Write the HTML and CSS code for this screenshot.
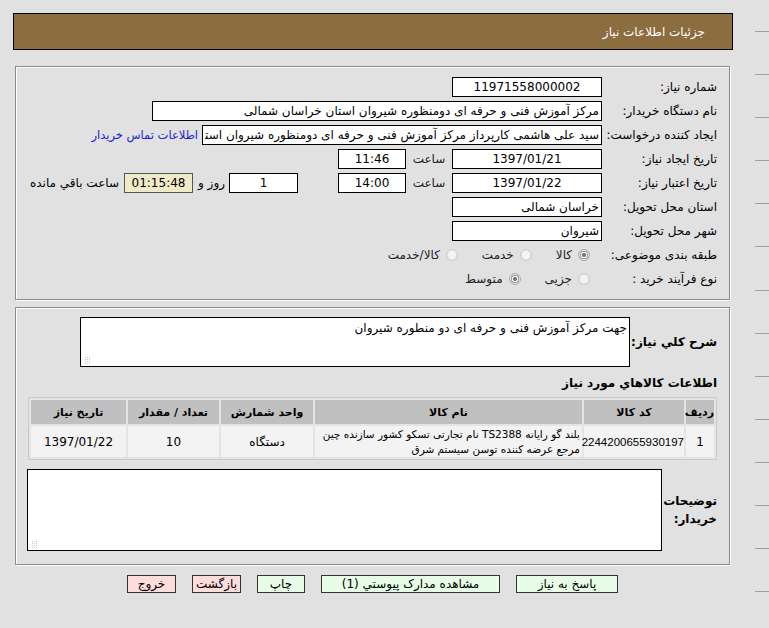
FILE: index.html
```html
<!DOCTYPE html>
<html lang="fa" dir="rtl">
<head>
<meta charset="utf-8">
<title>جزئیات اطلاعات نیاز</title>
<link rel="stylesheet" href="styles.css">
</head>
<body>
<div class="header"><span class="header-title">جزئیات اطلاعات نیاز</span></div>

<section class="panel panel-info">
  <div class="row">
    <div class="lbl">شماره نیاز:</div>
    <div class="fld w150 c">11971558000002</div>
  </div>
  <div class="row">
    <div class="lbl">نام دستگاه خریدار:</div>
    <div class="fld w450">مرکز آموزش فنی و حرفه ای دومنظوره شیروان استان خراسان شمالی</div>
  </div>
  <div class="row">
    <div class="lbl">ایجاد کننده درخواست:</div>
    <div class="fld w400"><span class="clip">سید علی هاشمی کارپرداز مرکز آموزش فنی و حرفه ای دومنظوره شیروان استان</span></div>
    <a class="contact" href="#">اطلاعات تماس خریدار</a>
  </div>
  <div class="row">
    <div class="lbl">تاریخ ایجاد نیاز:</div>
    <div class="fld w150 c">1397/01/21</div>
    <span class="sep">ساعت</span>
    <div class="fld w68 c">11:46</div>
  </div>
  <div class="row">
    <div class="lbl">تاریخ اعتبار نیاز:</div>
    <div class="fld w150 c">1397/01/22</div>
    <span class="sep">ساعت</span>
    <div class="fld w68 c">14:00</div>
    <div class="fld w69 c days">1</div>
    <span class="day-and">روز و</span>
    <div class="fld w69 c remain">01:15:48</div>
    <span class="remain-txt">ساعت باقي مانده</span>
  </div>
  <div class="row">
    <div class="lbl">استان محل تحویل:</div>
    <div class="fld w150">خراسان شمالی</div>
  </div>
  <div class="row">
    <div class="lbl">شهر محل تحویل:</div>
    <div class="fld w150">شیروان</div>
  </div>
  <div class="row">
    <div class="lbl">طبقه بندی موضوعی:</div>
    <div class="opts">
      <span class="opt"><span class="radio on"></span>كالا</span>
      <span class="opt"><span class="radio"></span>خدمت</span>
      <span class="opt"><span class="radio"></span>كالا/خدمت</span>
    </div>
  </div>
  <div class="row">
    <div class="lbl">نوع فرآیند خرید :</div>
    <div class="opts">
      <span class="opt"><span class="radio"></span>جزیی</span>
      <span class="opt"><span class="radio on"></span>متوسط</span>
    </div>
  </div>
</section>

<section class="panel panel-desc">
  <div class="area-row">
    <div class="lbl-b desc-lbl">شرح كلي نياز:</div>
    <div class="area area1">جهت مرکز آموزش فنی و حرفه ای دو منطوره شیروان</div>
  </div>
  <div class="sub-title">اطلاعات كالاهاي مورد نياز</div>
  <table class="items">
    <colgroup>
      <col class="c-idx"><col class="c-code"><col class="c-name"><col class="c-unit"><col class="c-qty"><col class="c-date">
    </colgroup>
    <thead>
      <tr><th>ردیف</th><th>کد کالا</th><th>نام کالا</th><th>واحد شمارش</th><th>تعداد / مقدار</th><th>تاریخ نیاز</th></tr>
    </thead>
    <tbody>
      <tr>
        <td>1</td>
        <td class="code">2244200655930197</td>
        <td class="name">بلند گو رایانه TS2388 نام تجارتی تسکو کشور سازنده چین<br>مرجع عرضه کننده توسن سیستم شرق</td>
        <td>دستگاه</td>
        <td>10</td>
        <td>1397/01/22</td>
      </tr>
    </tbody>
  </table>
  <div class="area-row notes-row">
    <div class="lbl-b notes-lbl">توضیحات خریدار:</div>
    <div class="area area2"></div>
  </div>
</section>

<div class="buttons">
  <span class="btn green b-reply">پاسخ به نیاز</span>
  <span class="btn green b-docs">مشاهده مدارک پیوستي (1)</span>
  <span class="btn green b-print">چاپ</span>
  <span class="btn pink b-back">بازگشت</span>
  <span class="btn pink b-exit">خروج</span>
</div>
</body>
</html>
```

FILE: styles.css
```css
html {
  height: 100%;
  background-color: #e1e1e1;
  background-image: repeating-linear-gradient(to bottom, transparent 0 31px, #a0a0a0 31px 32px, transparent 32px 43.1px);
  background-size: 14px 100%;
  background-repeat: no-repeat;
  background-position: right top;
}
body {
  margin: 0;
  font-family: "DejaVu Sans", sans-serif;
  font-size: 12px;
  color: #000;
}

.header {
  margin: 13px 36px 0 13px;
  height: 35px;
  border: 1px solid #000;
  background: #8c6d40;
  display: flex;
  align-items: center;
  padding-right: 27px;
}
.header-title {
  color: #fff;
  font-size: 12px;
}

.panel {
  margin: 16px 39px 0 15px;
  border: 1px solid #8a8a8a;
  box-shadow: inset 1px 1px 0 #fff, 1px 1px 0 #fff;
}
.panel-info {
  padding: 8px 12px 8px 12px;
}
.panel-desc {
  margin-top: 7px;
  padding: 9px 12px 13px 11px;
}

.row {
  display: flex;
  align-items: center;
  height: 24px;
  white-space: nowrap;
}
.lbl {
  width: 105px;
  margin-left: 10px;
  flex: none;
}
.fld {
  box-sizing: border-box;
  height: 20px;
  line-height: 18px;
  border: 1px solid #000;
  background: #fff;
  padding: 0 2px;
  overflow: hidden;
  white-space: nowrap;
  flex: none;
}
.clip {
  display: block;
  overflow: hidden;
}
.c { text-align: center; }
.w150 { width: 150px; }
.w450 { width: 450px; }
.w400 { width: 400px; }
.w68 { width: 68px; }
.w69 { width: 69px; }

.contact {
  color: #2222cc;
  text-decoration: none;
  margin-right: 4px;
  font-size: 11.5px;
}
.sep {
  width: 34px;
  margin: 0 6px;
  text-align: center;
  color: #222;
}
.days { margin-right: 40px; }
.day-and { margin: 0 4px 0 5px; }
.remain { background: #efebc9; border-color: #555; }
.remain-txt { margin-right: 5px; }

.opts {
  display: flex;
  align-items: center;
  margin-right: 12px;
}
.opt {
  display: flex;
  align-items: center;
  margin-left: 24px;
  color: #222;
}
.radio {
  box-sizing: border-box;
  width: 12px;
  height: 12px;
  border-radius: 50%;
  border: 1px solid #cdcdcd;
  background: radial-gradient(circle, #f4f4f4 0 3.5px, #e6e6e6 4.5px);
  margin-left: 6px;
}
.radio.on {
  border-color: #aaaaaa;
  background: radial-gradient(circle, #7a7a7a 0 1.8px, #f6f6f6 2.3px 3px, #9a9a9a 3.5px 4.1px, #ececec 4.5px);
}

.area-row {
  display: flex;
  align-items: center;
}
.lbl-b {
  font-weight: bold;
  font-size: 12px;
  flex: none;
}
.desc-lbl { width: 87px; }
.notes-lbl { width: 55px; white-space: normal; line-height: 18px; }
.area {
  position: relative;
  box-sizing: border-box;
  border: 1px solid #000;
  background: #fff;
  padding: 3px 2px;
}
.area::after {
  content: "";
  position: absolute;
  left: 3px;
  bottom: 2px;
  width: 6px;
  height: 7px;
  background: conic-gradient(#c9c9c9 25%, transparent 0) 0 0 / 2px 2px;
}
.area1 { width: 550px; height: 50px; }
.area2 { width: 635px; height: 82px; }

.sub-title {
  font-weight: bold;
  font-size: 12px;
  height: 20px;
  line-height: 20px;
  margin-top: 6px;
}

.items {
  margin-top: 4px;
  width: 689px;
  table-layout: fixed;
  border: 1px solid #cacaca;
  border-spacing: 2px;
  background: #e4e4e4;
}
.c-idx { width: 28px; }
.c-code { width: 100px; }
.c-name { width: 267px; }
.c-unit { width: 92px; }
.c-qty { width: 91px; }
.c-date { width: 95px; }
.items th {
  background: #c0c0c0;
  height: 24px;
  padding: 0;
  font-size: 11px;
  font-weight: bold;
  text-align: center;
}
.items td {
  background: #f3f3f3;
  height: 31px;
  padding: 0 2px;
  text-align: center;
  font-size: 12px;
}
.items td.code {
  font-family: "Liberation Sans", "DejaVu Sans", sans-serif;
  font-size: 11.5px;
  padding: 0;
}
.items td.name {
  text-align: right;
  font-size: 10.5px;
  line-height: 15px;
  white-space: nowrap;
  overflow: hidden;
}
.notes-row { margin-top: 9px; }

.buttons {
  margin: 10px 39px 0 15px;
  display: flex;
  justify-content: center;
  gap: 16px;
}
.btn {
  box-sizing: border-box;
  height: 18px;
  line-height: 16px;
  border: 1px solid #333;
  text-align: center;
  white-space: nowrap;
  font-size: 12px;
  display: flex;
  justify-content: center;
}
.green { background: #e8fde8; }
.pink { background: #fddcdc; }
.b-reply { width: 102px; }
.b-docs { width: 179px; }
.b-print { width: 48px; }
.b-back { width: 49px; }
.b-exit { width: 49px; }
```
